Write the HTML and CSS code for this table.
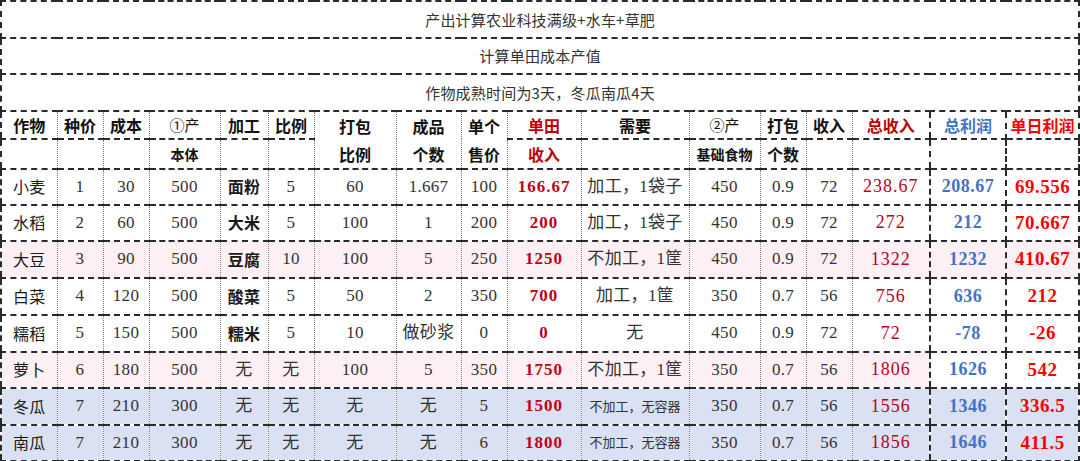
FILE: index.html
```html
<!DOCTYPE html>
<html lang="zh">
<head>
<meta charset="utf-8">
<link rel="stylesheet" href="styles.css">
</head>
<body>
<table class="sheet">
  <colgroup>
    <col style="width:56px"><col style="width:46px"><col style="width:46px"><col style="width:71px">
    <col style="width:48px"><col style="width:46px"><col style="width:82px"><col style="width:65px">
    <col style="width:46px"><col style="width:74px"><col style="width:108px"><col style="width:71px">
    <col style="width:46px"><col style="width:46px"><col style="width:78px"><col style="width:76px">
    <col style="width:73px">
  </colgroup>
  <tr class="title t1"><td colspan="17">产出计算农业科技满级+水车+草肥</td></tr>
  <tr class="title t2"><td colspan="17">计算单田成本产值</td></tr>
  <tr class="title t3"><td colspan="17">作物成熟时间为3天，冬瓜南瓜4天</td></tr>
  <tr class="head h1">
    <td>作物</td><td>种价</td><td>成本</td><td class="light">①产</td><td>加工</td><td>比例</td>
    <td rowspan="2" class="two">打包<br>比例</td>
    <td rowspan="2" class="two">成品<br>个数</td>
    <td rowspan="2" class="two">单个<br>售价</td>
    <td class="dred">单田</td><td>需要</td><td class="light">②产</td><td>打包</td><td>收入</td>
    <td class="dred">总收入</td><td class="blue sep">总利润</td><td class="red sep">单日利润</td>
  </tr>
  <tr class="head h2">
    <td></td><td></td><td></td><td class="sm">本体</td><td></td><td></td>
    <td class="dred">收入</td><td></td><td class="sm">基础食物</td><td>个数</td><td></td>
    <td></td><td class="sep"></td><td class="sep"></td>
  </tr>
  <tr class="row r36">
    <td class="crop">小麦</td><td>1</td><td>30</td><td>500</td><td class="prod">面粉</td><td>5</td><td>60</td><td>1.667</td><td>100</td>
    <td class="tian">166.67</td><td>加工，1袋子</td><td>450</td><td>0.9</td><td>72</td><td class="tot">238.67</td><td class="profit sep">208.67</td><td class="day sep">69.556</td>
  </tr>
  <tr class="row r36">
    <td class="crop">水稻</td><td>2</td><td>60</td><td>500</td><td class="prod">大米</td><td>5</td><td>100</td><td>1</td><td>200</td>
    <td class="tian">200</td><td>加工，1袋子</td><td>450</td><td>0.9</td><td>72</td><td class="tot">272</td><td class="profit sep">212</td><td class="day sep">70.667</td>
  </tr>
  <tr class="row r37 pink">
    <td class="crop">大豆</td><td>3</td><td>90</td><td>500</td><td class="prod">豆腐</td><td>10</td><td>100</td><td>5</td><td>250</td>
    <td class="tian">1250</td><td>不加工，1筐</td><td>450</td><td>0.9</td><td>72</td><td class="tot">1322</td><td class="profit sep">1232</td><td class="day sep">410.67</td>
  </tr>
  <tr class="row r37">
    <td class="crop">白菜</td><td>4</td><td>120</td><td>500</td><td class="prod">酸菜</td><td>5</td><td>50</td><td>2</td><td>350</td>
    <td class="tian">700</td><td>加工，1筐</td><td>350</td><td>0.7</td><td>56</td><td class="tot">756</td><td class="profit sep">636</td><td class="day sep">212</td>
  </tr>
  <tr class="row r37">
    <td class="crop">糯稻</td><td>5</td><td>150</td><td>500</td><td class="prod">糯米</td><td>5</td><td>10</td><td>做砂浆</td><td>0</td>
    <td class="tian">0</td><td>无</td><td>450</td><td>0.9</td><td>72</td><td class="tot">72</td><td class="profit sep">-78</td><td class="day sep">-26</td>
  </tr>
  <tr class="row r36 pink">
    <td class="crop">萝卜</td><td>6</td><td>180</td><td>500</td><td>无</td><td>无</td><td>100</td><td>5</td><td>350</td>
    <td class="tian">1750</td><td>不加工，1筐</td><td>350</td><td>0.7</td><td>56</td><td class="tot">1806</td><td class="profit sep white">1626</td><td class="day sep white">542</td>
  </tr>
  <tr class="row r37 blue-row">
    <td class="crop">冬瓜</td><td>7</td><td>210</td><td>300</td><td>无</td><td>无</td><td>无</td><td>无</td><td>5</td>
    <td class="tian">1500</td><td class="small">不加工，无容器</td><td>350</td><td>0.7</td><td>56</td><td class="tot">1556</td><td class="profit sep">1346</td><td class="day sep">336.5</td>
  </tr>
  <tr class="row r36 blue-row last">
    <td class="crop">南瓜</td><td>7</td><td>210</td><td>300</td><td>无</td><td>无</td><td>无</td><td>无</td><td>6</td>
    <td class="tian">1800</td><td class="small">不加工，无容器</td><td>350</td><td>0.7</td><td>56</td><td class="tot">1856</td><td class="profit sep">1646</td><td class="day sep">411.5</td>
  </tr>
</table>
</body>
</html>
```

FILE: styles.css
```css
html, body {
  margin: 0;
  padding: 0;
  background: #ffffff;
}

.sheet {
  border-collapse: collapse;
  table-layout: fixed;
  width: 1079px;
  font-family: "Liberation Serif", "Noto Sans CJK SC", serif;
  color: #222222;
  border: 2px dashed #2a2a2a;
}

.sheet td {
  padding: 0;
  text-align: center;
  vertical-align: middle;
  white-space: nowrap;
  overflow: hidden;
  border-left: 1px dotted #808080;
  border-right: 1px dotted #808080;
  border-top: 2px dashed #2a2a2a;
  border-bottom: 2px dashed #2a2a2a;
  font-size: 16px;
  line-height: 1.2;
}

.title td {
  font-family: "Noto Sans CJK SC", "Liberation Serif", sans-serif;
  font-size: 15px;
  color: #333333;
  border-left: 2px dashed #2a2a2a;
  border-right: 2px dashed #2a2a2a;
}
.title td { letter-spacing: 0.2px; }
.t1 { height: 37px; }
.t2 { height: 36px; }
.t3 { height: 37px; }

.head td {
  font-family: "Noto Sans CJK SC", serif;
  font-weight: 700;
  font-size: 16px;
  color: #111111;
}
.h1 { height: 28px; }
.h2 { height: 29px; }
.head td.two {
  line-height: 28px;
}
.head td.light {
  font-weight: 400;
  font-size: 15px;
}
.head td.sm {
  font-size: 14px;
}
.head td.dred { color: #c00000; }
.head td.blue { color: #4472c4; }
.head td.red { color: #ff0000; }

.r36 { height: 36px; }
.r37 { height: 37px; }

.row td {
  font-size: 17px;
  color: #333333;
  letter-spacing: 0.3px;
}
.row td.crop {
  font-family: "Noto Sans CJK SC", serif;
  font-size: 16px;
  font-weight: 400;
  color: #1a1a1a;
}
.row td.prod {
  font-family: "Noto Sans CJK SC", serif;
  font-size: 16px;
  font-weight: 700;
  color: #1a1a1a;
}
.row td.small {
  font-size: 13px;
  letter-spacing: 0;
}
.row td.tian {
  color: #c00018;
  font-weight: 700;
  letter-spacing: 1px;
}
.row td.tot {
  color: #b8001a;
  font-size: 18px;
  letter-spacing: 1px;
}
.row td.profit {
  color: #4472c4;
  font-weight: 700;
  font-size: 18px;
  letter-spacing: 0.5px;
}
.row td.day {
  color: #ff0000;
  font-weight: 700;
  font-size: 19px;
  letter-spacing: 0.5px;
}

.sheet td.sep {
  border-left: 2px dashed #2a2a2a;
  border-right: 2px dashed #2a2a2a;
}

.pink td { background: #fdf0f4; }
.blue-row td { background: #d9e1f2; }
.pink td.white { background: #ffffff; }
```
